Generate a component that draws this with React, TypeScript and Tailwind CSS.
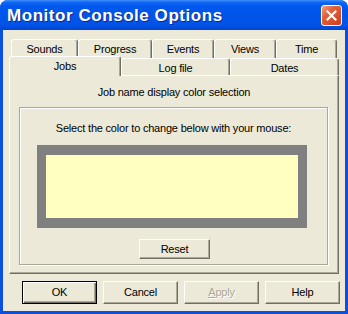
import React from "react";

const font = { fontFamily: '"Liberation Sans", Arial, sans-serif' };

function Tab({ label, w, selected }: { label: string; w: number; selected?: boolean }) {
  return (
    <div
      style={{ width: w }}
      className={
        "flex justify-center pt-[3px] text-[11px] leading-[13px] tracking-[-0.2px] text-black bg-[#ece9d8] border-l border-t border-white border-r border-r-[#716f64] rounded-t-[3px] shadow-[inset_-1px_0_0_#aca899] " +
        (selected ? "h-[20px] -mt-[2px] relative z-10" : "h-full")
      }
    >
      {label}
    </div>
  );
}

function Btn({
  label,
  w,
  h,
  def,
  disabled,
}: {
  label: React.ReactNode;
  w: number;
  h: number;
  def?: boolean;
  disabled?: boolean;
}) {
  return (
    <div
      style={{ width: w, height: h }}
      className={
        "flex items-center justify-center text-[11px] tracking-[-0.2px] bg-[#ece9d8] " +
        (def
          ? "border border-black shadow-[inset_1px_1px_0_#fff,inset_-1px_-1px_0_#716f64,inset_-2px_-2px_0_#aca899]"
          : "border-l border-t border-white border-r border-b border-r-[#716f64] border-b-[#716f64] shadow-[inset_-1px_-1px_0_#aca899]") +
        (disabled ? " text-[#aca899] [text-shadow:1px_1px_0_#fff]" : " text-black")
      }
    >
      {label}
    </div>
  );
}

export default function App() {
  return (
    <div style={font} className="w-[348px] h-[314px] flex flex-col overflow-hidden rounded-t-[8px] bg-[#0a4fe0]">
      {/* Title bar */}
      <div className="h-[30px] shrink-0 flex items-center pl-[7px] pr-[6px] bg-[linear-gradient(180deg,#3d8ff8_0%,#1467f3_8%,#0058ee_20%,#0055e8_60%,#0152e6_85%,#0043cf_100%)]">
        <div className="text-white font-bold text-[17px] tracking-[0.55px] [text-shadow:1px_1px_0_#0b2a8c] pt-[1px]">
          Monitor Console Options
        </div>
        <div className="ml-auto w-[21px] h-[21px] rounded-[3px] border border-white bg-[linear-gradient(135deg,#f0a080_0%,#e2603a_35%,#c8401c_100%)] flex items-center justify-center">
          <svg width="11" height="11" viewBox="0 0 11 11">
            <path d="M1.5 1.5 L9.5 9.5 M9.5 1.5 L1.5 9.5" stroke="#fff" strokeWidth="2.2" strokeLinecap="square" />
          </svg>
        </div>
      </div>

      {/* Body */}
      <div className="flex-1 mx-[3px] mb-[3px] bg-[#ece9d8] flex flex-col pl-[6px] pt-[9px]">
        {/* tab row 1 */}
        <div className="flex h-[19px] ml-[2px]">
          <Tab label="Sounds" w={67} />
          <Tab label="Progress" w={74} />
          <Tab label="Events" w={62} />
          <Tab label="Views" w={62} />
          <Tab label="Time" w={61} />
        </div>
        {/* tab row 2 */}
        <div className="flex h-[17px]">
          <Tab label="Jobs" w={112} selected />
          <Tab label="Log file" w={109} />
          <Tab label="Dates" w={109} />
        </div>
        {/* panel */}
        <div className="w-[330px] h-[199px] border-l border-t border-white border-r border-b border-r-[#716f64] border-b-[#716f64] shadow-[inset_-1px_-1px_0_#aca899] flex flex-col">
          <div className="mt-[10px] text-center text-[11px] leading-[13px] tracking-[-0.2px] text-black">
            Job name display color selection
          </div>
          <div className="mt-[8px] ml-[9px] w-[309px] h-[158px] border border-[#aca899] shadow-[inset_1px_1px_0_#fff,1px_1px_0_#fff] flex flex-col">
            <div className="mt-[14px] text-center text-[11px] leading-[13px] tracking-[-0.2px] text-black">
              Select the color to change below with your mouse:
            </div>
            <div className="mt-[10px] ml-[17px] w-[270px] h-[83px] bg-[#808080] px-[9px] py-[10px]">
              <div className="w-full h-full bg-[#ffffc0]" />
            </div>
            <div className="mt-[11px] ml-[119px]">
              <Btn label="Reset" w={71} h={20} />
            </div>
          </div>
        </div>
        {/* buttons */}
        <div className="flex mt-[7px] ml-[13px] gap-[6px]">
          <Btn label="OK" w={75} h={23} def />
          <Btn label="Cancel" w={75} h={23} />
          <Btn
            label={
              <span>
                <span className="underline">A</span>pply
              </span>
            }
            w={75}
            h={23}
            disabled
          />
          <Btn label="Help" w={75} h={23} />
        </div>
      </div>
    </div>
  );
}
